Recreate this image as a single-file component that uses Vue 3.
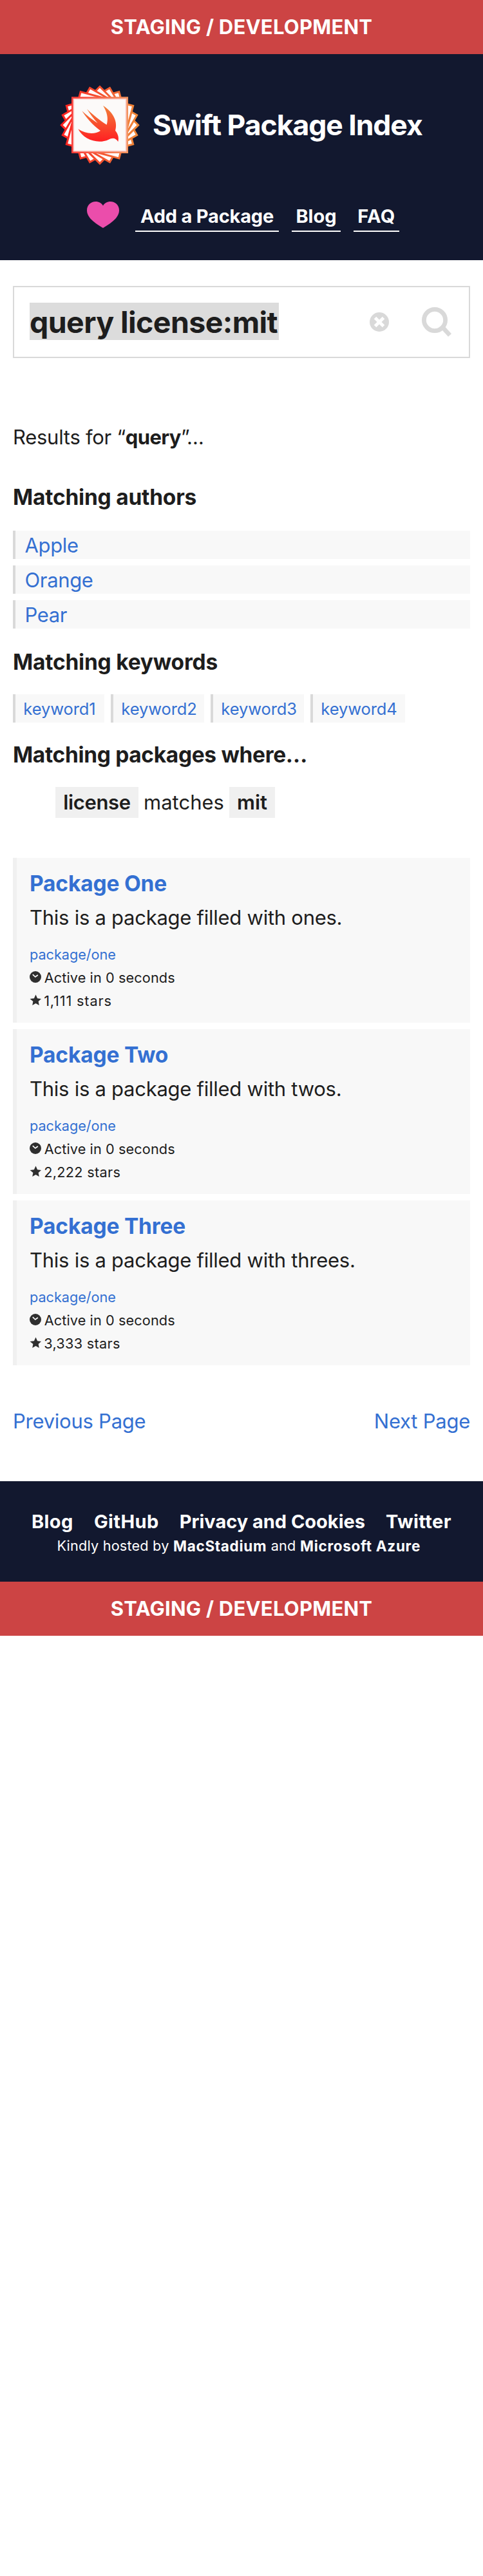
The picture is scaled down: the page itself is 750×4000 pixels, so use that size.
<script setup>
const authors = ['Apple', 'Orange', 'Pear']
const keywords = ['keyword1', 'keyword2', 'keyword3', 'keyword4']
const packages = [
  { title: 'Package One', summary: 'This is a package filled with ones.', stars: '1,111' },
  { title: 'Package Two', summary: 'This is a package filled with twos.', stars: '2,222' },
  { title: 'Package Three', summary: 'This is a package filled with threes.', stars: '3,333' },
]
const rotations = [75, 60, 45, 30, 15]

// Outline of the logo's square turned clockwise about the badge centre.
function square(degrees) {
  const radius = 179
  const corners = [45, 135, 225, 315].map((corner) => {
    const angle = ((corner + degrees) * Math.PI) / 180
    return `${(225 + radius * Math.cos(angle)).toFixed(1)} ${(221.5 + radius * Math.sin(angle)).toFixed(1)}`
  })
  return `M${corners.join('L')}Z`
}
</script>

<template>
  <div class="page">
    <div class="banner">STAGING / DEVELOPMENT</div>
    <header>
      <div class="brand">
        <svg class="logo" viewBox="39 35 372 372">
          <defs>
            <linearGradient id="edge" gradientUnits="userSpaceOnUse" x1="42" y1="0" x2="408" y2="0">
              <stop offset="0" stop-color="#fb1f1f" />
              <stop offset="0.5" stop-color="#f4502f" />
              <stop offset="1" stop-color="#ee8b38" />
            </linearGradient>
            <linearGradient id="topEdge" gradientUnits="userSpaceOnUse" x1="93" y1="0" x2="357" y2="0">
              <stop offset="0" stop-color="#fa3a36" />
              <stop offset="1" stop-color="#f29560" />
            </linearGradient>
            <linearGradient id="bird" x1="0" y1="0" x2="0" y2="1">
              <stop offset="0" stop-color="#f1813a" />
              <stop offset="1" stop-color="#ff1f22" />
            </linearGradient>
          </defs>
          <g stroke="url(#edge)" stroke-width="9">
            <path
              v-for="r in rotations"
              :key="r"
              :d="square(r)"
              fill="#fffafa"
            />
          </g>
          <rect x="97" y="94" width="256" height="255" fill="#fcfaf9" stroke="url(#topEdge)" stroke-width="8" />
          <rect x="103" y="100" width="244" height="243" fill="none" stroke="#f98a80" stroke-opacity="0.45" stroke-width="5" />
          <path
            fill="url(#bird)"
            d="M240 131C290 163 309 208 297 247C310 263 315 280 310 299C297 277 280 282 266 289C216 313 148 289 124 240C160 264 202 266 228 248C192 222 162 187 142 156C165 178 190 197 215 213C196 193 180 171 165 147C193 174 226 202 257 220C266 190 258 159 240 131Z"
          />
        </svg>
        <h1>Swift Package Index</h1>
      </div>
      <nav>
        <svg class="heart" viewBox="0 0 50 41">
          <path d="M25 41C12 33 0 25 0 13.500C0 5.500 6 0 13.500 0C18.500 0 23 2.500 25 6.500C27 2.500 31.500 0 36.500 0C44 0 50 5.500 50 13.500C50 25 38 33 25 41Z" fill="#eb4dab" />
        </svg>
        <a class="add">Add a Package</a>
        <a class="blog">Blog</a>
        <a class="faq">FAQ</a>
      </nav>
    </header>

    <main>
      <div class="search">
        <span class="query">query license:mit</span>
        <svg class="clear" viewBox="0 0 30 30">
          <circle cx="15" cy="15" r="15" fill="#d9d9d9" />
          <path d="M8.500 8.500L21.500 21.500M21.500 8.500L8.500 21.500" stroke="#fff" stroke-width="5" />
        </svg>
        <svg class="glass" viewBox="0 0 46 46">
          <circle cx="20" cy="20" r="16.600" fill="none" stroke="#d9d9d9" stroke-width="6.800" />
          <path d="M32 31L43.500 43.500" stroke="#d9d9d9" stroke-width="6.800" />
        </svg>
      </div>

      <p class="results">Results for “<strong>query</strong><span class="tail">”…</span></p>

      <h4 class="first">Matching authors</h4>
      <ul class="authors">
        <li v-for="a in authors" :key="a">{{ a }}</li>
      </ul>

      <h4>Matching keywords</h4>
      <ul class="keywords">
        <li v-for="k in keywords" :key="k">{{ k }}</li>
      </ul>

      <h4 class="where">Matching packages where…</h4>
      <div class="filter">
        <strong class="key">license</strong>
        <span>matches</span>
        <strong class="value">mit</strong>
      </div>

      <section class="packages">
        <article v-for="p in packages" :key="p.title">
          <h3>{{ p.title }}</h3>
          <p>{{ p.summary }}</p>
          <small class="repo">package/one</small>
          <small>
            <svg viewBox="0 0 18 18">
              <circle cx="9" cy="9" r="9" fill="#2f2f2f" />
              <path d="M4.800 5.200L8.800 9L12.800 6" fill="none" stroke="#fff" stroke-width="1.700" />
            </svg>
            <span class="active">Active in 0 seconds</span>
          </small>
          <small>
            <svg viewBox="0 0 18 18">
              <path d="M9.500 .500L12.100 6.200L18 6.900L13.600 11L14.800 17L9.500 14L4.200 17L5.400 11L.500 6.900L6.900 6.200Z" fill="#2f2f2f" />
            </svg>
            <span class="stars">{{ p.stars }} stars</span>
          </small>
        </article>
      </section>

      <div class="pagination">
        <a>Previous Page</a>
        <a>Next Page</a>
      </div>
    </main>

    <footer>
      <div class="links">
        <a class="loose">Blog</a>
        <a class="loose">GitHub</a>
        <a>Privacy and Cookies</a>
        <a class="loose">Twitter</a>
      </div>
      <div class="hosting">
        <span>Kindly hosted by</span>
        <strong>MacStadium</strong>
        <span>and</span>
        <strong>Microsoft Azure</strong>
      </div>
    </footer>
    <div class="banner">STAGING / DEVELOPMENT</div>
  </div>
</template>

<style>
body {
  margin: 0;
  background: #fff;
}
</style>

<style scoped>
.page {
  font-family: Inter, "Liberation Sans", sans-serif;
  font-size: 31px;
  color: #1d1d1d;
  white-space: nowrap;
}
h1, h3, h4, p, ul {
  margin: 0;
  padding: 0;
  list-style: none;
}
strong {
  font-weight: 600;
}
.banner {
  height: 84px;
  line-height: 84px;
  background: #cc4444;
  color: #fff;
  font-weight: 700;
  letter-spacing: 0.24px;
  text-align: center;
}
header {
  box-sizing: border-box;
  height: 320px;
  padding-top: 47.700px;
  background: #12182f;
  color: #fff;
}
.brand {
  display: flex;
  align-items: center;
  gap: 20px;
  padding-left: 93px;
}
.logo {
  width: 124px;
  height: 124px;
}
h1 {
  font-size: 44.500px;
  font-weight: 700;
  line-height: 60px;
  letter-spacing: -1.050px;
}
nav {
  display: flex;
  gap: 20px;
  margin-top: 58.300px;
  padding-left: 135px;
}
.heart {
  width: 50px;
  height: 41px;
  margin: -1px 5px 0 0;
}
nav a {
  border-bottom: 2px solid #fff;
  font-size: 29px;
  font-weight: 700;
  line-height: 44px;
  text-align: center;
}
.add {
  width: 223px;
  letter-spacing: -0.200px;
}
.blog {
  width: 76px;
}
.faq {
  width: 71px;
  letter-spacing: 0.4px;
}
main {
  padding: 40px 20px 0;
}
.search {
  display: flex;
  align-items: center;
  box-sizing: border-box;
  height: 112px;
  padding: 0 27px 0 24px;
  border: 2px solid #d9d9d9;
}
.query {
  width: 387px;
  margin: -2px auto 0 0;
  padding-top: 4.200px;
  background: #dcdcdc;
  font-size: 46.500px;
  font-weight: 700;
  line-height: 53.800px;
  letter-spacing: -0.600px;
}
.clear {
  width: 30px;
  height: 30px;
}
.glass {
  width: 46px;
  height: 46px;
  margin-left: 51px;
}
.results {
  margin-top: 98px;
  line-height: 50px;
  letter-spacing: -0.27px;
}
.results strong {
  font-weight: 700;
  letter-spacing: -0.600px;
}
.tail {
  letter-spacing: -1.500px;
}
h4 {
  margin-top: 28px;
  font-size: 33.500px;
  font-weight: 700;
  line-height: 48px;
  letter-spacing: -0.22px;
}
.first {
  margin-top: 44px;
}
.where {
  margin-top: 26px;
  letter-spacing: -0.34px;
}
.authors {
  display: flex;
  flex-direction: column;
  gap: 10px;
  margin-top: 28px;
}
.authors li {
  padding: 1px 0 0 14.500px;
  border-left: 4px solid #d9d9d9;
  background: #f8f8f8;
  color: #3470d2;
  line-height: 43px;
  letter-spacing: -0.35px;
}
.keywords {
  display: flex;
  gap: 10px;
  margin-top: 26px;
}
.keywords li {
  box-sizing: border-box;
  width: 145px;
  padding: 1px 0 0 12.300px;
  border-left: 4px solid #d9d9d9;
  background: #f8f8f8;
  color: #3470d2;
  font-size: 25.500px;
  line-height: 43px;
  letter-spacing: -0.08px;
}
.keywords li:first-child {
  width: 142px;
}
.keywords li:last-child {
  width: 147px;
}
.filter {
  display: flex;
  margin: 26px 0 0 66px;
  line-height: 48px;
}
.filter strong {
  background: #f0f0f0;
  text-align: center;
}
.filter span {
  width: 141px;
  text-align: center;
}
.key {
  width: 129px;
  letter-spacing: -0.38px;
}
.value {
  width: 71px;
}
.packages {
  display: flex;
  flex-direction: column;
  gap: 10px;
  margin-top: 62px;
}
article {
  padding: 18px 20px 16px;
  border-left: 6px solid #f0f0f0;
  background: #f8f8f8;
}
h3 {
  color: #3470d2;
  font-size: 33.500px;
  font-weight: 700;
  line-height: 44px;
  letter-spacing: -0.18px;
}
article p {
  margin: 7px 0 15px;
  line-height: 48px;
  letter-spacing: -0.26px;
}
small {
  display: flex;
  align-items: center;
  height: 36px;
  font-size: 21.700px;
  line-height: 36px;
  letter-spacing: 0.1px;
}
small svg {
  width: 18px;
  height: 18px;
  margin: -2px 4.700px 0 0;
}
.repo {
  color: #3470d2;
  letter-spacing: -0.04px;
}
.stars {
  margin-left: -0.500px;
  letter-spacing: 0.3px;
}
article:first-child .stars {
  letter-spacing: 0.85px;
}
.pagination {
  display: flex;
  justify-content: space-between;
  margin-top: 63px;
  color: #3470d2;
  line-height: 48px;
  letter-spacing: -0.25px;
}
footer {
  box-sizing: border-box;
  height: 156px;
  margin-top: 69px;
  padding-top: 41px;
  background: #12182f;
  color: #fff;
}
.links {
  display: flex;
  justify-content: space-between;
  padding: 0 49px;
  font-size: 29px;
  font-weight: 700;
  line-height: 44px;
  letter-spacing: -0.03px;
}
.links .loose {
  letter-spacing: 0.4px;
}
.hosting {
  display: flex;
  gap: 6.500px;
  padding-left: 88.500px;
  font-size: 21.700px;
  line-height: 31px;
  letter-spacing: 0.18px;
}
.hosting strong {
  font-size: 22.500px;
  font-weight: 700;
  letter-spacing: 0.7px;
}
</style>
